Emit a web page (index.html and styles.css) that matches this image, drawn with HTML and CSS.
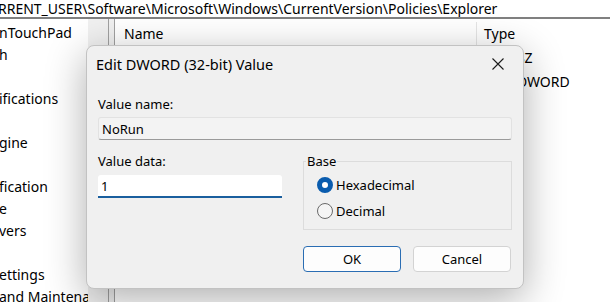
FILE: index.html
```html
<!DOCTYPE html>
<html lang="en">
  <head>
    <meta charset="UTF-8" />
    <title>Registry Editor - Edit DWORD</title>
    <link rel="stylesheet" href="styles.css">
  </head>
  <body>
    <div class="address">RRENT_USER\Software\Microsoft\Windows\CurrentVersion\Policies\Explorer</div>
    <div class="main">
      <ul class="tree">
        <li>nTouchPad</li>
        <li>h</li>
        <li></li>
        <li>ifications</li>
        <li></li>
        <li>gine</li>
        <li></li>
        <li>fication</li>
        <li>e</li>
        <li>vers</li>
        <li></li>
        <li>ettings</li>
        <li>and Maintenance</li>
      </ul>
      <div class="tree-scroll"></div>
      <div class="splitter"></div>
      <div class="list">
        <div class="list-head">
          <span class="col-name">Name</span>
          <span class="col-type">Type</span>
        </div>
        <!-- names sit under the dialog -->
        <div class="list-row">
          <span class="col-name"></span>
          <span class="col-type">REG_SZ</span>
        </div>
        <div class="list-row">
          <span class="col-name"></span>
          <span class="col-type">REG_DWORD</span>
        </div>
      </div>
    </div>

    <div class="dialog">
      <div class="dialog-title">
        <span>Edit DWORD (32-bit) Value</span>
        <svg class="close" width="12" height="12" viewBox="0 0 12 12">
          <path d="M0.5 0.5 L11.5 11.5 M11.5 0.5 L0.5 11.5" stroke="#1b1b1b" stroke-width="1.1" fill="none" />
        </svg>
      </div>
      <div class="dialog-body">
        <label class="field-label">Value name:</label>
        <input type="text" class="name-input" value="NoRun" readonly />
        <div class="data-row">
          <div class="data-col">
            <label class="field-label">Value data:</label>
            <input type="text" class="data-input" value="1" />
          </div>
          <fieldset class="base">
            <legend>Base</legend>
            <label class="radio"><input type="radio" name="base" checked />Hexadecimal</label>
            <label class="radio"><input type="radio" name="base" />Decimal</label>
          </fieldset>
        </div>
        <div class="buttons">
          <button class="btn btn-ok">OK</button>
          <button class="btn">Cancel</button>
        </div>
      </div>
    </div>
  </body>
</html>
```

FILE: styles.css
```css
* {
  box-sizing: border-box;
}
body {
  margin: 0;
  width: 610px;
  height: 302px;
  overflow: hidden;
  background-color: #fff;
  font-family: "Noto Sans", sans-serif;
  color: #000;
}
.address {
  height: 19px;
  line-height: 17px;
  font-size: 14px;
  white-space: nowrap;
  text-indent: -2px;
  border-bottom: 2px solid #808080;
  overflow: hidden;
}
.main {
  display: flex;
  height: 283px;
}
.tree {
  width: 88px;
  margin: 0;
  padding: 3px 0 0 0;
  list-style: none;
  overflow: hidden;
  font-size: 14px;
}
.tree li {
  height: 22px;
  line-height: 22px;
  white-space: nowrap;
  text-indent: -1px;
}
.tree-scroll {
  width: 20px;
  background-color: #f0f0f0;
}
.splitter {
  width: 7px;
  border-left: 1px solid #a0a0a0;
  border-right: 1px solid #a0a0a0;
  background-color: #f0f0f0;
}
.list {
  flex: 1;
  font-size: 14px;
}
.list-head,
.list-row {
  display: flex;
  height: 24px;
  line-height: 24px;
  white-space: nowrap;
}
.list-head {
  height: 27px;
  padding-top: 3px;
}
.col-name {
  width: 362px;
  padding-left: 9px;
}
.list-head .col-name {
  border-right: 1px solid #e5e5e5;
}
.col-type {
  padding-left: 7px;
}

/* dialog */
.dialog {
  position: absolute;
  left: 86px;
  top: 45px;
  width: 438px;
  height: 244px;
  background-color: #f0f0f0;
  border: 1px solid #c2c2c2;
  border-radius: 8px;
  box-shadow: 0 10px 40px rgba(0, 0, 0, 0.32);
  font-size: 13px;
}
.dialog-title {
  display: flex;
  justify-content: space-between;
  align-items: center;
  height: 36px;
  padding: 0 19px 0 9px;
  font-size: 14.5px;
}
.close {
  display: block;
}
.dialog-body {
  padding: 13px 11px 0 11px;
}
.field-label {
  display: block;
  height: 18px;
  line-height: 18px;
  margin-bottom: 4px;
}
.name-input,
.data-input {
  display: block;
  width: 100%;
  height: 23px;
  padding: 0 0 0 3px;
  font-family: "Noto Sans", sans-serif;
  font-size: 13px;
  color: #000;
  outline: none;
}
.name-input {
  background-color: #f3f3f3;
  border: 1px solid #e2e2e2;
  border-bottom-color: #9a9a9a;
  border-radius: 3px;
  margin-bottom: 12px;
}
.data-row {
  display: flex;
  gap: 21px;
}
.data-col {
  width: 184px;
}
.data-col .field-label {
  margin-bottom: 5px;
}
.data-input {
  background-color: #fff;
  border: none;
  border-bottom: 2px solid #1a5f9e;
  border-radius: 3px 3px 0 0;
}
.base {
  flex: 1;
  margin: 0;
  height: 78px;
  padding: 2px 0 0 2px;
  border: 1px solid #dcdcdc;
}
.base legend {
  padding: 0 1px;
  line-height: 18px;
  font-size: 13px;
}
.radio {
  display: flex;
  align-items: center;
  gap: 3px;
  height: 26px;
  padding-left: 11px;
}
.radio input {
  appearance: none;
  margin: 0;
  width: 16px;
  height: 16px;
  border-radius: 50%;
  border: 1px solid #6a6a6a;
  background-color: #f5f5f5;
}
.radio input:checked {
  border: 5px solid #0a5cae;
  background-color: #fff;
}
.buttons {
  display: flex;
  justify-content: flex-end;
  gap: 12px;
  margin-top: 16px;
  padding-right: 1px;
}
.btn {
  width: 98px;
  height: 26px;
  background-color: #fdfdfd;
  border: 1px solid #d3d3d3;
  border-radius: 4px;
  font-family: "Noto Sans", sans-serif;
  font-size: 13px;
  color: #000;
}
.btn-ok {
  border-color: #2a6db3;
}
```
